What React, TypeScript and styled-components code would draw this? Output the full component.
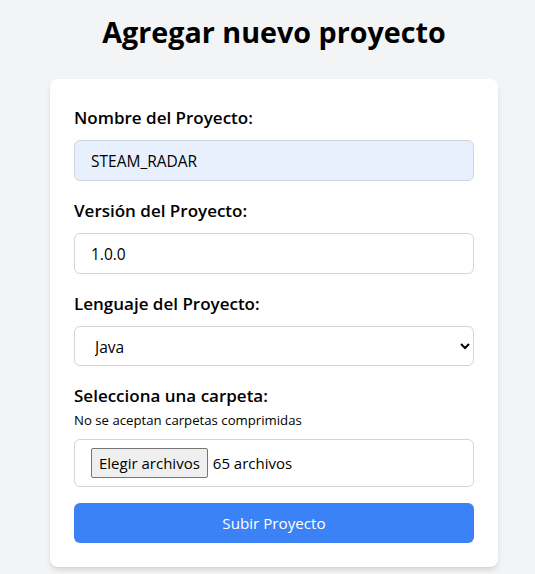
import React from 'react'
import styled, { createGlobalStyle } from 'styled-components'

const GlobalStyle = createGlobalStyle`
	html, body {
		margin: 0;
		padding: 0;
		background: #f3f4f6;
		font-family: 'Open Sans', 'Noto Sans', sans-serif;
		color: #000;
	}
	* {
		box-sizing: border-box;
	}
`

const App: React.FC = () => (
	<>
		<GlobalStyle />
		<StyledPage>
			<StyledTitle>Agregar nuevo proyecto</StyledTitle>
			<StyledCard onSubmit={(e) => e.preventDefault()}>
				<StyledField>
					<StyledLabel htmlFor="nombre">Nombre del Proyecto:</StyledLabel>
					<StyledInput id="nombre" defaultValue="STEAM_RADAR" filled />
				</StyledField>
				<StyledField>
					<StyledLabel htmlFor="version">Versión del Proyecto:</StyledLabel>
					<StyledInput id="version" defaultValue="1.0.0" />
				</StyledField>
				<StyledField>
					<StyledLabel htmlFor="lenguaje">Lenguaje del Proyecto:</StyledLabel>
					<StyledSelect id="lenguaje" defaultValue="java">
						<option value="java">Java</option>
						<option value="python">Python</option>
						<option value="javascript">JavaScript</option>
					</StyledSelect>
				</StyledField>
				<StyledField>
					<StyledLabel as="div">Selecciona una carpeta:</StyledLabel>
					<StyledHint>No se aceptan carpetas comprimidas</StyledHint>
					<StyledFileBox>
						<StyledFileButton type="button">Elegir archivos</StyledFileButton>
						<span>65 archivos</span>
					</StyledFileBox>
				</StyledField>
				<StyledSubmit type="submit">Subir Proyecto</StyledSubmit>
			</StyledCard>
		</StyledPage>
	</>
)

const StyledPage = styled.div`
	display: flex;
	flex-direction: column;
	align-items: center;
	padding: 14px 0 6px 13px;
`

const StyledTitle = styled.h1`
	margin: 0 0 29px;
	font-size: 28.7px;
	line-height: 36px;
	font-weight: 700;
`

const StyledCard = styled.form`
	width: 448px;
	background: #fff;
	border-radius: 8px;
	padding: 25px 24px 24px;
	box-shadow: 0 4px 6px -1px rgba(0, 0, 0, 0.1), 0 2px 4px -2px rgba(0, 0, 0, 0.1);
`

const StyledField = styled.div`
	margin-bottom: 16px;
`

const StyledLabel = styled.label`
	display: block;
	font-size: 17px;
	line-height: 28px;
	font-weight: 600;
	margin-bottom: 8px;
`

const StyledHint = styled.p`
	margin: -8px 0 9px;
	font-size: 13.2px;
	line-height: 20px;
`

const StyledInput = styled.input<{ filled?: boolean }>`
	display: block;
	width: 100%;
	height: 41px;
	padding: 8px 16px;
	font: inherit;
	font-size: 15.5px;
	color: #000;
	background: ${(props) => (props.filled ? '#e8f0fe' : '#fff')};
	border: 1px solid #d1d5db;
	border-radius: 6px;
	outline: none;
`

const StyledSelect = styled.select`
	display: block;
	width: 100%;
	height: 40px;
	margin-top: 1px;
	padding: 8px 12px 8px 16px;
	font: inherit;
	font-size: 15.5px;
	color: #000;
	background: #fff;
	border: 1px solid #d1d5db;
	border-radius: 6px;
	outline: none;
`

const StyledFileBox = styled.div`
	display: flex;
	align-items: center;
	gap: 5px;
	height: 48px;
	padding: 8px 16px;
	font-size: 15px;
	border: 1px solid #d1d5db;
	border-radius: 6px;
`

const StyledFileButton = styled.button`
	height: 30px;
	padding: 0 7px;
	font: inherit;
	font-size: 15px;
	color: #000;
	background: #efefef;
	border: 1px solid #767676;
	border-radius: 2px;
`

const StyledSubmit = styled.button`
	display: block;
	width: 100%;
	height: 40px;
	font: inherit;
	font-size: 15.2px;
	color: #fff;
	background: #3b82f6;
	border: none;
	border-radius: 6px;
	cursor: pointer;
`

export default App
